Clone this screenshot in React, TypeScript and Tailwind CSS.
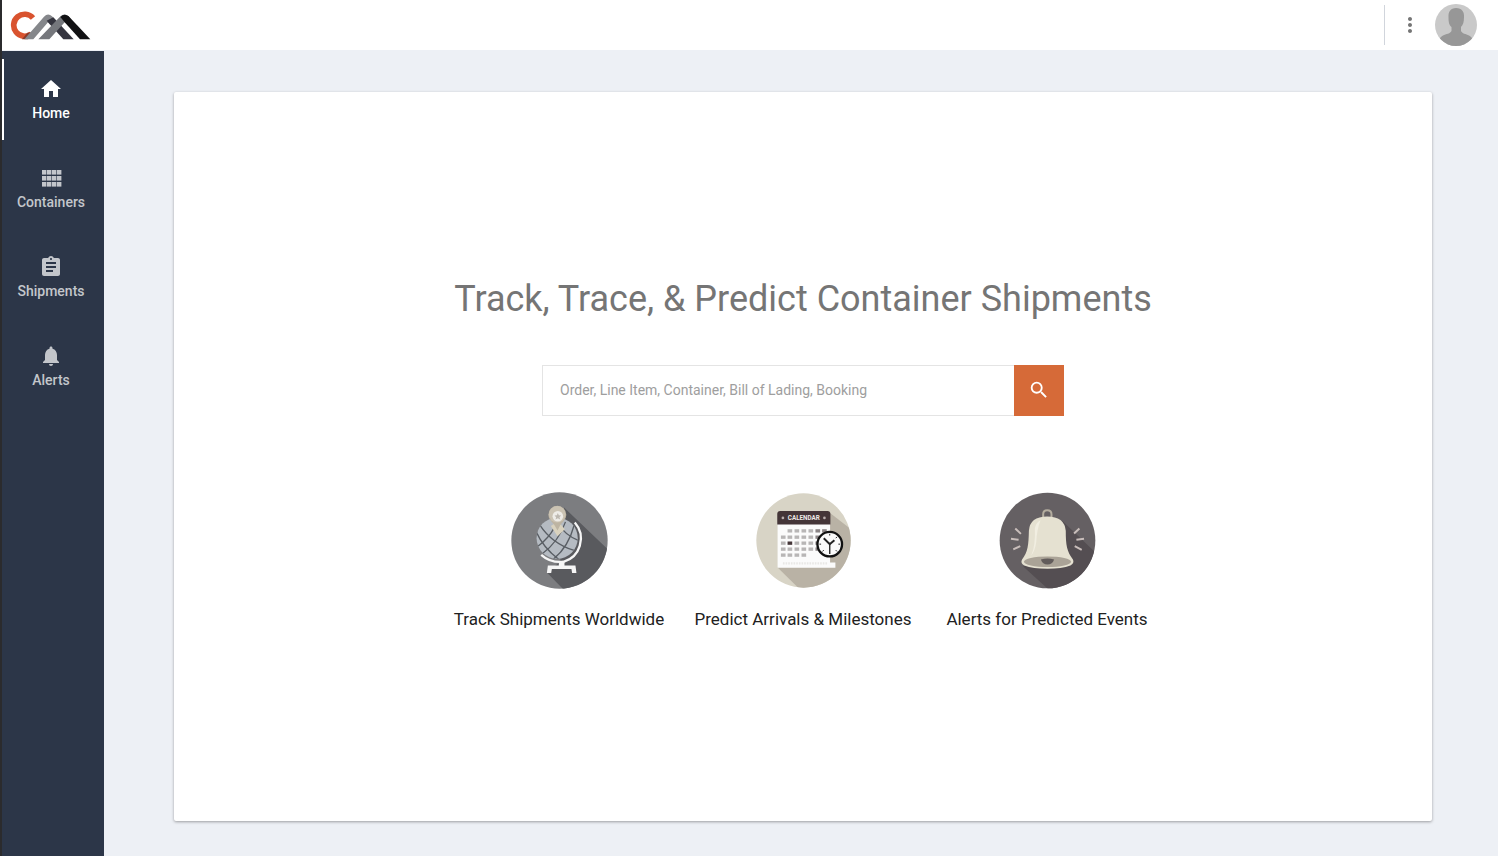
import {
  MdAssignment,
  MdHome,
  MdMoreVert,
  MdNotifications,
  MdSearch,
} from "react-icons/md";

const ContainersIcon = ({ size }: { size: number }) => (
  <svg viewBox="0 0 24 24" width={size} height={size} fill="currentColor" aria-hidden="true">
    {[4, 10, 16].map((y) =>
      [3, 8, 13, 18].map((x) => <rect key={`${x}-${y}`} x={x} y={y} width="4.400" height="4.600" />)
    )}
  </svg>
);

const navItems = [
  { label: "Home", icon: MdHome, active: true },
  { label: "Containers", icon: ContainersIcon, active: false },
  { label: "Shipments", icon: MdAssignment, active: false },
  { label: "Alerts", icon: MdNotifications, active: false },
];

const Logo = () => (
  <svg viewBox="32 27 243 87" className="h-[29px] w-[81px]" aria-hidden="true">
    <path d="M101 48 A33 33 0 1 0 96 96" fill="none" stroke="#d9532f" strokeWidth="17" />
    <path d="M68 112 L84 92 L106 90 L86 112Z" fill="#8b3a2a" />
    <path d="M75 112 L134 44 Q146 32 158 43 L168 54 L154 70 L146 61 L102 112Z" fill="#85878b" />
    <path d="M142 56 L162 46 L223 112 L192 112Z" fill="#35353f" />
    <path d="M117 112 L182 44 Q195 32 208 43 L214 51 L196 61 L150 112Z" fill="#75777c" />
    <path d="M196 61 L183 45 Q196 32 208 43 L273 112 L242 112Z" fill="#111113" />
  </svg>
);

const Avatar = () => (
  <svg viewBox="0 0 42 42" className="size-[42px]" aria-hidden="true">
    <defs>
      <clipPath id="avatar">
        <circle cx="21" cy="21" r="21" />
      </clipPath>
    </defs>
    <g clipPath="url(#avatar)">
      <rect width="42" height="42" fill="#c9c9c9" />
      <path
        d="M21 4 C27 4 29.500 8 29 13 C29 18 28 21 26 23 L26 27 C27 29.500 31 30 34 31.500 C37 33 39 36 40 42 L2 42 C3 36 5 33 8 31.500 C11 30 15.500 29.500 16.500 27 L16.500 23 C14 21 13.500 18 13.500 13 C13 8 15.500 4 21 4Z"
        fill="#979797"
      />
    </g>
  </svg>
);

const GlobeIcon = () => (
  <svg viewBox="32 20 292 292" className="size-[97px]" aria-hidden="true">
    <defs>
      <clipPath id="globe-disc">
        <circle cx="178" cy="166" r="145" />
      </clipPath>
      <clipPath id="globe-ball">
        <circle cx="171" cy="159" r="62" />
      </clipPath>
    </defs>
    <g clipPath="url(#globe-disc)">
      <rect x="32" y="20" width="292" height="292" fill="#7c7d80" />
      <path d="M192 67 L340 208 L340 330 L206 330 L140 262 L180 230Z" fill="#595a5e" />
    </g>
    <circle cx="171" cy="159" r="62" fill="#b5bbc2" />
    <g clipPath="url(#globe-ball)" fill="none" stroke="#595e64" strokeWidth="4">
      <path d="M108 140 Q130 190 180 226 M118 118 Q155 175 222 196 M178 120 Q195 150 236 166" />
      <path d="M112 184 Q145 160 162 128 M126 206 Q175 170 196 110 M160 222 Q205 185 222 120" />
    </g>
    <path d="M152 122 L174 108 L194 132 L172 153Z" fill="#d9d2be" />
    <path d="M172 136 Q164 118 153 108 A27 27 0 1 1 190 108 Q179 118 172 136Z" fill="#bdb4a2" />
    <circle cx="171" cy="87" r="25" fill="#cbc3b3" />
    <circle cx="173" cy="93" r="16" fill="#eeece7" />
    <path d="M173 83 L176 90 L183 91 L178 96 L180 103 L173 99 L166 103 L168 96 L163 91 L170 90Z" fill="#bdb8b0" />
    <path d="M224 112 Q251 142 239 182 Q228 219 190 230 Q151 234 123 209" fill="none" stroke="#f6f6f6" strokeWidth="7" />
    <path d="M176 229 L193 229 L193 241 L226 241 L229 264 L216 264 L214 252 L155 252 L153 264 L140 264 L143 241 L176 241Z" fill="#f6f6f6" />
  </svg>
);

const dayRows = [
  { y: 132, xs: [126, 147, 168, 189, 210, 230] },
  { y: 151, xs: [106, 126, 147, 168, 189, 210] },
  { y: 169, xs: [106, 126, 147, 168, 189, 210] },
  { y: 187, xs: [106, 126, 147, 168, 189, 210] },
  { y: 205, xs: [106, 126, 147, 168] },
];

const CalendarIcon = () => (
  <svg viewBox="28 20 292 292" className="size-[97px]" aria-hidden="true">
    <defs>
      <clipPath id="calendar-disc">
        <circle cx="174" cy="166" r="142" />
      </clipPath>
    </defs>
    <g clipPath="url(#calendar-disc)">
      <rect x="28" y="20" width="292" height="292" fill="#d8d4c6" />
      <path d="M252 82 L340 150 L340 330 L180 330 L96 247Z" fill="#b9b2a5" />
    </g>
    <path d="M96 112 H254 V232 H270 V248 H96Z" fill="#fbfbfb" />
    <path d="M95 118 V86 Q95 77 104 77 H246 Q255 77 255 86 V118Z" fill="#443538" />
    <circle cx="112" cy="98" r="4" fill="#b9aead" />
    <circle cx="237" cy="98" r="4" fill="#b9aead" />
    <text
      x="175"
      y="105"
      textAnchor="middle"
      fontFamily="Roboto, sans-serif"
      fontSize="19"
      fontWeight="700"
      fill="#eee9e6"
    >
      CALENDAR
    </text>
    {dayRows.map((row) =>
      row.xs.map((x) => (
        <rect
          key={`${x}-${row.y}`}
          x={x}
          y={row.y}
          width="14"
          height="10"
          fill={x === 126 && row.y === 169 ? "#443538" : x > 200 ? "#8b8586" : "#b8b6b6"}
        />
      ))
    )}
    <path d="M112 235 H248" stroke="#e9e8e6" strokeWidth="7" strokeDasharray="5 3" />
    <circle cx="253" cy="177" r="37" fill="#fafafa" stroke="#111" strokeWidth="7" />
    <g fill="none" stroke="#222">
      <path d="M235 159 L253 177 L267 165" strokeWidth="6" />
      <path d="M253 173 V207" strokeWidth="4" />
      <path d="M253 146 V151 M222 177 H227 M279 177 H284 M231 199 L235 195 M275 199 L271 195 M275 155 L271 159" strokeWidth="3" />
    </g>
  </svg>
);

const BellIcon = () => (
  <svg viewBox="31 20 292 292" className="size-[97px]" aria-hidden="true">
    <defs>
      <clipPath id="bell-disc">
        <circle cx="177" cy="166" r="144" />
      </clipPath>
    </defs>
    <g clipPath="url(#bell-disc)">
      <rect x="31" y="20" width="292" height="292" fill="#656063" />
      <path d="M222 107 L340 220 L340 330 L198 330 L104 244Z" fill="#544e52" />
    </g>
    <path d="M164 98 V87 Q164 75 176 75 Q189 75 189 87 V98" fill="none" stroke="#b4ad9f" strokeWidth="6" />
    <path
      d="M121 137 Q124 94 176 94 Q228 94 232 137 C232 180 235 199 254 224 Q258 235 246 241 Q220 251 177 251 Q133 251 107 241 Q95 235 100 224 C118 201 120 180 121 137Z"
      fill="#e5e1d1"
    />
    <path d="M139 128 Q143 111 156 105 Q145 133 143 171 Q140 195 128 211 Q141 183 139 128Z" fill="#f1eee1" />
    <ellipse cx="177" cy="230" rx="71" ry="16" fill="#aaa397" />
    <path d="M157 223 Q177 217 197 223 Q192 238 177 238 Q162 238 157 223Z" fill="#625c5b" />
    <path
      d="M80 130 L97 146 M67 161 L90 164 M74 193 L95 183 M273 130 L257 145 M287 161 L264 164 M280 194 L259 183"
      stroke="#c9bebb"
      strokeWidth="6"
    />
  </svg>
);

const features = [
  { label: "Track Shipments Worldwide", icon: GlobeIcon },
  { label: "Predict Arrivals & Milestones", icon: CalendarIcon },
  { label: "Alerts for Predicted Events", icon: BellIcon },
];

const App = () => {
  return (
    <div className="flex min-h-screen flex-col border-l-2 border-[#2b2b2d] bg-[#edf0f5] font-[Roboto,sans-serif]">
      <header className="flex h-[51px] items-center justify-between border-b border-[#edf0f5] bg-white pr-[21px] pl-2">
        <a href="#" aria-label="CXM home">
          <Logo />
        </a>
        <div className="flex items-center">
          <div className="h-10 w-px bg-gray-300" />
          <button type="button" aria-label="More options" className="mx-[13px] text-[#757575]">
            <MdMoreVert size={24} />
          </button>
          <button type="button" aria-label="Account">
            <Avatar />
          </button>
        </div>
      </header>

      <div className="flex flex-1">
        <nav className="flex w-[102px] shrink-0 flex-col gap-2 bg-[#2c3648] pt-2">
          {navItems.map((item) => (
            <a
              key={item.label}
              href="#"
              className={
                item.active
                  ? "flex h-[81px] flex-col items-center justify-center border-l-2 border-white pr-1.5 text-sm font-medium text-white"
                  : "flex h-[81px] flex-col items-center justify-center pr-1 text-sm font-medium text-[#c3c6cb]"
              }
            >
              <item.icon size={24} />
              <span className="mt-0.5">{item.label}</span>
            </a>
          ))}
        </nav>

        <main className="flex flex-1 pt-[41px] pr-[66px] pb-[35px] pl-[70px]">
          <div className="flex flex-1 flex-col items-center justify-center rounded-xs bg-white pb-2 shadow-[0_1px_3px_rgba(0,0,0,0.35)]">
            <h1 className="text-4xl leading-12 text-[#757575]">
              Track, Trace, &amp; Predict Container Shipments
            </h1>

            <form className="mt-[42px] flex h-[51px] w-[522px]">
              <input
                type="text"
                aria-label="Search shipments"
                placeholder="Order, Line Item, Container, Bill of Lading, Booking"
                className="min-w-0 flex-1 border border-r-0 border-[#e4e4e4] px-[17px] text-sm outline-none placeholder:text-[#9e9e9e]"
              />
              <button
                type="button"
                aria-label="Search"
                className="flex w-[50px] items-center justify-center bg-[#d66a38] text-white"
              >
                <MdSearch size={22} />
              </button>
            </form>

            <div className="mt-[76px] grid grid-cols-[repeat(3,244px)]">
              {features.map((feature) => (
                <div key={feature.label} className="flex flex-col items-center">
                  <feature.icon />
                  <p className="mt-[18px] text-[17px] leading-6 text-[#212121]">{feature.label}</p>
                </div>
              ))}
            </div>
          </div>
        </main>
      </div>
    </div>
  );
};

export default App;
